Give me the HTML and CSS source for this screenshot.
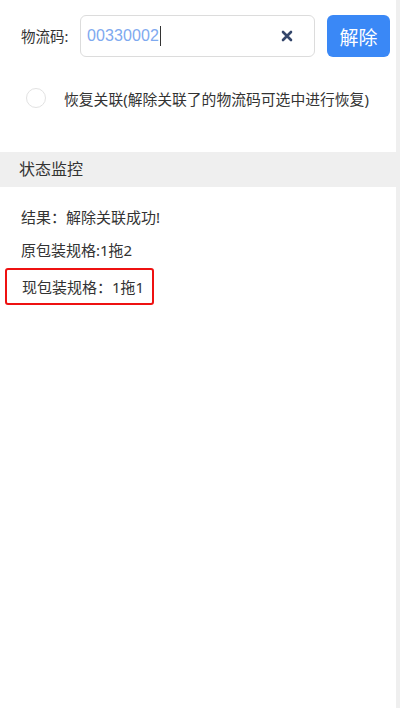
FILE: index.html
```html
<!DOCTYPE html>
<html lang="zh-CN">
<head>
<meta charset="utf-8">
<link rel="stylesheet" href="styles.css">
</head>
<body>
<div class="page">
  <div class="search-row">
    <label class="label">物流码:</label>
    <div class="input">
      <span class="value">00330002</span><span class="caret"></span>
      <svg class="clear" width="12" height="12" viewBox="0 0 12 12"><path d="M2 2 L10 10 M10 2 L2 10" stroke="#34466b" stroke-width="2.6" stroke-linecap="round"/></svg>
    </div>
    <button class="btn">解除</button>
  </div>
  <div class="radio-row">
    <span class="radio"></span>
    <span class="radio-text">恢复关联(解除关联了的物流码可选中进行恢复)</span>
  </div>
  <div class="section-title">状态监控</div>
  <div class="results">
    <div class="line">结果：解除关联成功!</div>
    <div class="line second">原包装规格:1拖2</div>
    <div class="line boxed">现包装规格：1拖1</div>
  </div>
</div>
</body>
</html>
```
FILE: styles.css
```css
html, body {
  margin: 0;
  padding: 0;
  background: #fff;
}
body {
  font-family: "Noto Sans", "Noto Sans CJK SC", sans-serif;
  color: #333;
}
.page {
  width: 396px;
  min-height: 708px;
  border-right: 4px solid #efefef;
  box-sizing: content-box;
}
.search-row {
  display: flex;
  align-items: center;
  padding-top: 15px;
  padding-left: 21px;
}
.label {
  font-size: 14.5px;
  width: 59px;
  line-height: 42px;
}
.input {
  width: 235px;
  height: 42px;
  box-sizing: border-box;
  border: 1px solid #dcdcdc;
  border-radius: 6px;
  display: flex;
  align-items: center;
  padding-left: 6px;
  position: relative;
}
.value {
  font-family: "Liberation Sans", sans-serif;
  font-size: 16px;
  color: #7ea9ef;
  letter-spacing: 0.1px;
}
.caret {
  width: 1px;
  height: 20px;
  background: #333;
  margin-left: 1px;
}
.clear {
  margin-left: auto;
  margin-right: 21px;
}
.btn {
  margin-left: 12px;
  width: 63px;
  height: 42px;
  border: none;
  border-radius: 6px;
  background: #3a88f6;
  color: #fff;
  font-family: "Noto Sans CJK SC", sans-serif;
  font-size: 19px;
  padding: 0;
}
.radio-row {
  display: flex;
  align-items: center;
  margin-top: 29px;
  padding-left: 26px;
  height: 24px;
}
.radio {
  width: 18px;
  height: 18px;
  border: 1px solid #e2e2e2;
  border-radius: 50%;
}
.radio-text {
  margin-left: 18px;
  font-size: 14.8px;
}
.section-title {
  margin-top: 42px;
  height: 35px;
  line-height: 35px;
  background: #efefef;
  padding-left: 19px;
  font-size: 16px;
}
.results {
  padding-top: 20px;
  padding-left: 21px;
}
.line {
  font-size: 15px;
  line-height: 20px;
}
.second {
  margin-top: 13px;
}
.boxed {
  display: inline-block;
  margin-top: 8px;
  margin-left: -16px;
  width: 149px;
  box-sizing: border-box;
  border: 2px solid #ee1111;
  border-radius: 3px;
  padding: 7px 0 6px 15px;
}
```
